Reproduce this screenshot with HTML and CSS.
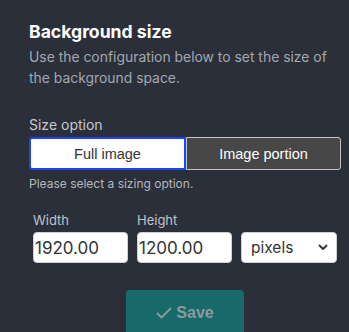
FILE: index.html
```html
<!DOCTYPE html>
<html>
<head>
<meta charset="utf-8">
<link rel="stylesheet" href="styles.css">
</head>
<body>
<div class="panel">
  <h2 class="title">Background size</h2>
  <p class="desc">Use the configuration below to set the size of the background space.</p>
  <div class="opt-label">Size option</div>
  <div class="seg">
    <button class="seg-btn active">Full image</button>
    <button class="seg-btn">Image portion</button>
  </div>
  <div class="hint">Please select a sizing option.</div>
  <div class="dims">
    <div class="field">
      <label class="f-label">Width</label>
      <input class="f-input" value="1920.00">
    </div>
    <div class="field">
      <label class="f-label">Height</label>
      <input class="f-input" value="1200.00">
    </div>
    <div class="field">
      <div class="f-label">&nbsp;</div>
      <div class="f-select">
        <span>pixels</span>
        <svg class="chev" width="10" height="7" viewBox="0 0 10 7"><polyline points="1.5,1.5 5,5 8.5,1.5" fill="none" stroke="#333" stroke-width="1.8" stroke-linecap="round" stroke-linejoin="round"/></svg>
      </div>
    </div>
  </div>
  <div class="actions">
    <button class="save">
      <svg class="check" width="16" height="12" viewBox="0 0 16 12"><polyline points="1.5,6.5 5.5,10.5 14.5,1.5" fill="none" stroke="#8c9c9c" stroke-width="1.8" stroke-linecap="round" stroke-linejoin="round"/></svg>
      <span>Save</span>
    </button>
  </div>
</div>
</body>
</html>
```

FILE: styles.css
```css
html, body {
  margin: 0;
  padding: 0;
  background: #2a2f3a;
  height: 100%;
  overflow: hidden;
}
.panel {
  padding: 20px 8px 0 29px;
  font-family: Inter, "Noto Sans", sans-serif;
  width: 312px;
}
.title {
  margin: 0;
  font-size: 17.6px;
  line-height: 24px;
  font-weight: 700;
  color: #ffffff;
}
.desc {
  margin: 3px 0 0;
  font-size: 13.9px;
  line-height: 21px;
  color: #a3a8b0;
}
.opt-label {
  margin-top: 27px;
  font-size: 14px;
  line-height: 18px;
  color: #c6c8cc;
}
.seg {
  display: flex;
  margin-top: 3px;
  height: 33px;
}
.seg-btn {
  flex: 1;
  margin: 0;
  font-family: "Liberation Sans", Arial, sans-serif;
  font-size: 14.5px;
  border: 1px solid #c4c4c4;
  background: #474747;
  color: #ffffff;
  padding: 0;
}
.seg-btn.active {
  background: #ffffff;
  color: #333333;
  border: 2px solid #1a44ff;
  border-radius: 3px 0 0 3px;
}
.seg-btn:last-child {
  border-radius: 0 3px 3px 0;
}
.hint {
  margin-top: 6px;
  font-size: 12px;
  line-height: 16px;
  color: #b4b8be;
}
.dims {
  display: flex;
  gap: 9px;
  margin: 20px 0 0 4px;
}
.field {
  display: flex;
  flex-direction: column;
}
.f-label {
  font-size: 13px;
  line-height: 16px;
  color: #c0c4ca;
  margin-bottom: 4px;
}
.f-input {
  width: 95px;
  height: 31px;
  box-sizing: border-box;
  border: 1px solid #d0d0d0;
  border-radius: 4px;
  background: #fff;
  font-family: Inter, "Noto Sans", sans-serif;
  font-size: 17px;
  color: #333;
  padding: 0 1px;
  outline: none;
}
.f-select {
  width: 96px;
  height: 31px;
  box-sizing: border-box;
  border: 1px solid #d0d0d0;
  border-radius: 4px;
  background: #fff;
  display: flex;
  align-items: center;
  justify-content: space-between;
  padding: 0 8px 0 9px;
  font-size: 15.5px;
  color: #333;
}
.actions {
  display: flex;
  justify-content: center;
  margin-top: 27px;
}
.save {
  width: 118px;
  height: 46px;
  border: none;
  border-radius: 4px;
  background: #17696a;
  display: flex;
  align-items: center;
  justify-content: center;
  gap: 4px;
  padding: 0;
  font-family: "Liberation Sans", Arial, sans-serif;
  font-weight: 700;
  font-size: 16px;
  color: #8c9c9c;
}
```
